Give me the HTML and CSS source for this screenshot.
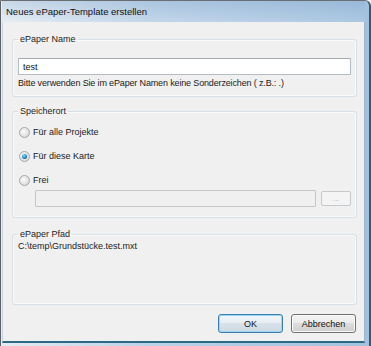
FILE: index.html
```html
<!DOCTYPE html>
<html lang="de">
<head>
	<meta charset="UTF-8">
	<title>Neues ePaper-Template erstellen</title>
	<link rel="stylesheet" href="styles.css">
</head>
<body>
	<div class="window">
		<div class="titlebar">Neues ePaper-Template erstellen</div>
		<div class="content">
			<fieldset class="group group-name">
				<legend>ePaper Name</legend>
				<input class="textbox" type="text" value="test">
				<div class="hint">Bitte verwenden Sie im ePaper Namen keine Sonderzeichen ( z.B.: .)</div>
			</fieldset>

			<fieldset class="group group-place">
				<legend>Speicherort</legend>
				<label class="option"><span class="radio"></span>Für alle Projekte</label>
				<label class="option"><span class="radio checked"></span>Für diese Karte</label>
				<label class="option"><span class="radio"></span>Frei</label>
				<div class="pathRow">
					<input class="textbox disabled" type="text" value="" disabled>
					<button class="browse" disabled>...</button>
				</div>
			</fieldset>

			<fieldset class="group group-path">
				<legend>ePaper Pfad</legend>
				<div class="path">C:\temp\Grundstücke.test.mxt</div>
			</fieldset>

			<div class="buttons">
				<button class="btn default">OK</button>
				<button class="btn">Abbrechen</button>
			</div>
		</div>
	</div>
</body>
</html>
```

FILE: styles.css
```css
html,body {
	margin: 0;
	padding: 0;
	background: #fff;
}
body {
	font-family: "Liberation Sans", Arial, sans-serif;
	font-size: 9px;
	color: #1a1a1a;
}
.window {
	width: 371px;
	height: 346px;
	box-sizing: border-box;
	display: flex;
	flex-direction: column;
	border-left: 1px solid #5e6266;
	border-top: 1px solid #6a6e72;
	border-right: 2px solid #2c5f76;
	border-radius: 0 6px 0 0;
	padding: 0 4px 3px 1px;
	background: linear-gradient(to right, #e4ebf2 0%, #bcd2e8 40%, #a3c1de 100%);
}
.titlebar {
	height: 21px;
	line-height: 21px;
	padding-left: 4px;
	font-size: 9.5px;
	color: #111;
	background: linear-gradient(to bottom, rgba(120,160,200,0.25), rgba(255,255,255,0.1));
}
.content {
	flex: 1;
	background: #f0f0f0;
	border-left: 1px solid #c9d6e2;
	border-right: 1px solid #9fb5c9;
	border-bottom: 2px solid #2b6a86;
	padding: 0 7px 0 9px;
	display: flex;
	flex-direction: column;
}
.group {
	margin: 0;
	padding: 0 5px;
	border: 1px solid #d5dfe5;
	border-radius: 3px;
	box-shadow: inset 0 0 0 1px #f8fafb;
}
.group legend {
	padding: 0 2px;
	margin: 0;
	line-height: 12px;
	color: #222;
}
.group-name {
	margin-top: 11px;
	padding-bottom: 7px;
}
.group-place {
	margin-top: 8px;
	padding-top: 6px;
	padding-bottom: 10px;
}
.group-path {
	margin-top: 10px;
	padding-bottom: 52px;
	padding-left: 5px;
}
.textbox {
	display: block;
	box-sizing: border-box;
	width: 100%;
	height: 17px;
	margin: 13px 0 0;
	padding: 0 4px;
	font-family: inherit;
	font-size: 9px;
	color: #111;
	background: #fff;
	border: 1px solid #b5bcc4;
	border-top-color: #a4aab2;
	border-radius: 1px;
	outline: none;
}
.hint {
	margin-top: 2px;
	line-height: 12px;
	letter-spacing: -0.15px;
}
.option {
	display: flex;
	align-items: center;
	height: 18px;
	margin-bottom: 6px;
	padding-left: 1px;
}
.radio {
	width: 11px;
	height: 11px;
	box-sizing: border-box;
	margin-right: 3px;
	border-radius: 50%;
	border: 1px solid #a3a7ab;
	background: radial-gradient(circle at 40% 40%, #fdfdfd 0%, #e3e3e3 55%, #cfcfcf 100%);
	display: flex;
	align-items: center;
	justify-content: center;
}
.radio.checked::after {
	content: "";
	width: 5px;
	height: 5px;
	border-radius: 50%;
	background: radial-gradient(circle at 40% 35%, #8fe3ff 0%, #2a8fd0 45%, #0b3f74 100%);
}
.pathRow {
	display: flex;
	align-items: center;
	gap: 5px;
	margin-top: -5px;
	padding-left: 17px;
}
.pathRow .textbox {
	flex: 1;
	margin: 0;
	background: #f0f0f0;
	border-color: #c3c7cb;
}
.browse {
	width: 30px;
	height: 15px;
	padding: 0;
	font-family: inherit;
	font-size: 8px;
	color: #b0b0b0;
	background: #f4f4f4;
	border: 1px solid #c5c9cc;
	border-radius: 2px;
}
.path {
	line-height: 12px;
	padding-left: 0;
}
.buttons {
	display: flex;
	justify-content: flex-end;
	gap: 8px;
	margin-top: 9px;
	padding-right: 1px;
}
.btn {
	width: 65px;
	height: 19px;
	padding: 0;
	font-family: inherit;
	font-size: 9px;
	color: #111;
	border: 1px solid #707070;
	border-radius: 3px;
	background: linear-gradient(to bottom, #f2f2f2 0%, #ebebeb 49%, #dddddd 50%, #cfcfcf 100%);
	box-shadow: inset 0 0 0 1px #fbfbfb;
}
.btn.default {
	border-color: #3c7fb1;
	background: linear-gradient(to bottom, #f0f6fa 0%, #e6eef4 49%, #d8e2ea 50%, #cdd9e3 100%);
	box-shadow: inset 0 0 0 1px #9fd3f0;
}
```
